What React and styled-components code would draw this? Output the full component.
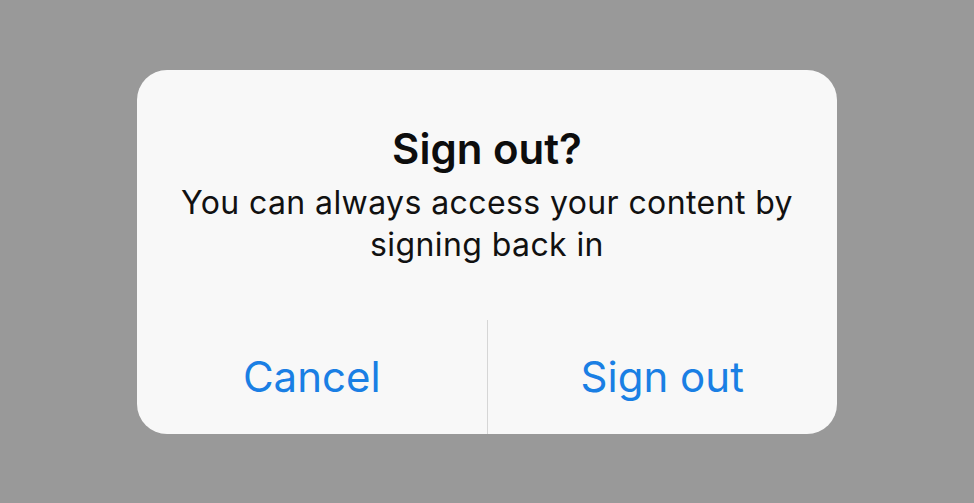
import React from 'react';
import styled, { createGlobalStyle } from 'styled-components';

const GlobalStyle = createGlobalStyle`
  html, body {
    margin: 0;
    padding: 0;
    height: 100%;
  }
  body {
    background: #999999;
    font-family: Inter, "Liberation Sans", sans-serif;
    -webkit-font-smoothing: antialiased;
  }
`;

const Backdrop = styled.div`
  display: flex;
  align-items: center;
  justify-content: center;
  width: 100vw;
  height: 100vh;
`;

const Alert = styled.div`
  display: flex;
  flex-direction: column;
  width: 700px;
  height: 364px;
  background: #f8f8f8;
  border-radius: 30px;
  overflow: hidden;
`;

const Body = styled.div`
  display: flex;
  flex-direction: column;
  align-items: center;
  padding: 54px 30px 0;
  height: 250px;
  flex: none;
  box-sizing: border-box;
  text-align: center;
`;

const Title = styled.h2`
  margin: 0;
  font-size: 42px;
  line-height: 50px;
  font-weight: 600;
  color: #0d0d0d;
`;

const Message = styled.p`
  margin: 8px 0 0;
  font-size: 32px;
  line-height: 42px;
  font-weight: 400;
  letter-spacing: 0.4px;
  color: #111111;
`;

const Actions = styled.div`
  display: grid;
  grid-template-columns: 1fr 1px 1fr;
  flex: 1;
`;

const Divider = styled.div`
  background: #d6d6d6;
`;

const Action = styled.button`
  border: none;
  background: transparent;
  padding: 0;
  font-family: inherit;
  font-size: 42px;
  font-weight: 400;
  color: #1a7fe4;
  cursor: pointer;
`;

export default function App() {
  return (
    <>
      <GlobalStyle />
      <Backdrop>
        <Alert>
          <Body>
            <Title>Sign out?</Title>
            <Message>You can always access your content by signing back in</Message>
          </Body>
          <Actions>
            <Action>Cancel</Action>
            <Divider />
            <Action>Sign out</Action>
          </Actions>
        </Alert>
      </Backdrop>
    </>
  );
}
